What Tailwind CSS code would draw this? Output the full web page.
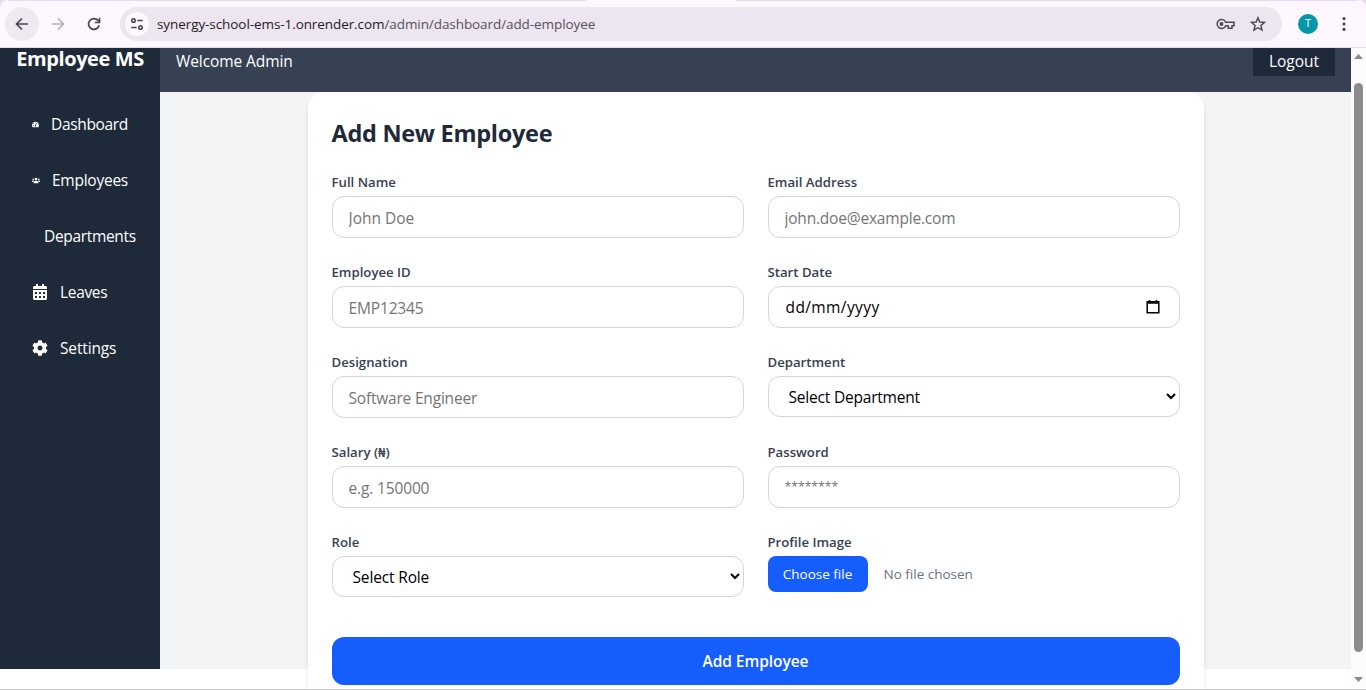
<!DOCTYPE html>
<html lang="en">
<head>
<meta charset="utf-8">
<title>Employee MS</title>
<script src="https://cdn.jsdelivr.net/npm/@tailwindcss/browser@4"></script>
</head>
<body class="h-[690px] w-[1366px] overflow-hidden bg-white font-['Open_Sans','Noto_Sans',sans-serif] text-[15.5px]">
<div class="flex h-[690px] flex-col">
  <!-- Browser toolbar -->
  <div class="h-12 shrink-0 bg-[#e9daf7]">
    <div class="relative flex h-12 items-center rounded-t-[8px] border-b border-[#e4dfe6] bg-[#fef7ff] pl-[5px] pr-[14px]">
      <div class="absolute left-2 top-0 h-px w-[578px] bg-[#e9daf7]"></div>
      <div class="absolute left-[736px] top-0 h-px w-[622px] bg-[#e9daf7]"></div>
      <div class="flex size-[34px] items-center justify-center rounded-full bg-[#f1e9f2]">
        <svg class="size-4" viewBox="0 0 16 16" fill="none" stroke="#4c4352" stroke-width="1.7"><path d="M14 8H3M8 2.500 2.500 8 8 13.500"/></svg>
      </div>
      <div class="ml-[11px] flex size-4 items-center justify-center">
        <svg class="size-4" viewBox="0 0 16 16" fill="none" stroke="#b6afb9" stroke-width="1.6"><path d="M2 8h11M8 2.500 13.500 8 8 13.500"/></svg>
      </div>
      <svg class="ml-5 size-4" viewBox="0 0 16 16" fill="none" stroke="#4c4352" stroke-width="1.7"><path d="M13.200 9.300A5.400 5.400 0 1 1 12 4.400L13.500 6"/><path d="M13.500 1.800v4.700H8.800"/></svg>
      <div class="ml-[18px] flex h-[34px] w-[1162px] items-center rounded-full bg-[#ede6f0] pl-[5px] pr-4">
        <div class="flex size-6 items-center justify-center rounded-full bg-[#fef7ff]">
          <svg class="size-4" viewBox="0 0 16 16" fill="none" stroke="#4a4550" stroke-width="1.5"><circle cx="4.500" cy="4.500" r="1.800"/><path d="M8.300 4.500h5.500M2.200 11.500h5.500"/><circle cx="11.500" cy="11.500" r="1.800"/></svg>
        </div>
        <div class="ml-2 whitespace-nowrap pt-px text-[13.500px] tracking-[-0.08px] text-[#1f1b24]">synergy-school-ems-1.onrender.com<span class="text-[#57515c]">/admin/dashboard/add-employee</span></div>
        <svg class="ml-auto h-[12px] w-[19px]" viewBox="0 0 19 12" fill="none" stroke="#4c4650" stroke-width="1.500"><path d="M9.800 4.200A4.500 4.500 0 1 0 9.800 7.800H12.200V10.200H16V7.800H18V4.200Z"/><circle cx="5.500" cy="6" r="1.200" fill="#4c4650"/></svg>
        <svg class="ml-[15px] size-4" viewBox="0 0 16 16" fill="none" stroke="#4c4650" stroke-width="1.400"><path d="M8 1.700 9.800 6l4.700.4-3.600 3.100 1.100 4.600L8 11.700l-4 2.400 1.100-4.600L1.500 6.400 6.200 6Z"/></svg>
      </div>
      <div class="ml-4 flex size-5 items-center justify-center rounded-full bg-[#0397a7] text-[11px] text-white">T</div>
      <svg class="ml-auto h-4 w-4" viewBox="0 0 16 16" fill="#4c4352"><circle cx="8" cy="2.600" r="1.600"/><circle cx="8" cy="8" r="1.600"/><circle cx="8" cy="13.400" r="1.600"/></svg>
    </div>
  </div>

  <!-- Page viewport -->
  <div class="flex h-[641px] shrink-0 overflow-hidden">
    <aside class="h-[621px] w-40 shrink-0 bg-gray-800 text-white">
      <div class="flex h-12 items-start justify-center whitespace-nowrap text-[20px] font-bold leading-[21px] tracking-[-0.4px]">Employee MS</div>
      <nav class="flex flex-col gap-4 px-4 pt-2 tracking-[-0.33px]">
        <a class="flex h-10 items-center whitespace-nowrap px-4 pt-0.5"><svg class="-mt-0.5 mr-3 h-[7px] w-[7px]" viewBox="0 0 576 512" fill="currentColor"><path d="M288 32C129 32 0 161 0 320c0 53 14 102 39 145 6 9 16 15 27 15h444c11 0 21-6 27-15 25-43 39-92 39-145C576 161 447 32 288 32zm0 64c18 0 32 14 32 32s-14 32-32 32-32-14-32-32 14-32 32-32zM96 384c-18 0-32-14-32-32s14-32 32-32 32 14 32 32-14 32-32 32zm48-160c-18 0-32-14-32-32s14-32 32-32 32 14 32 32-14 32-32 32zm246-72-61 184c14 12 23 29 23 48 0 12-3 23-9 32H233c-6-9-9-20-9-32 0-35 27-63 62-64l61-184c10-26 51-12 43 16z"/></svg>Dashboard</a>
        <a class="flex h-10 items-center whitespace-nowrap px-4 pt-0.5 tracking-[-0.25px]"><svg class="-mt-0.5 mr-3 h-[7px] w-2" viewBox="0 0 640 512" fill="currentColor"><circle cx="320" cy="144" r="112"/><circle cx="96" cy="160" r="64"/><circle cx="544" cy="160" r="64"/><path d="M128 432v-29c0-64 51-115 115-115h154c64 0 115 51 115 115v29c0 27-21 48-48 48H176c-27 0-48-21-48-48zM0 320c0-35 29-64 64-64h64c18 0 34 7 45 19-40 22-69 61-75 109H32c-18 0-32-14-32-32zM640 320c0-35-29-64-64-64h-64c-18 0-34 7-45 19 40 22 69 61 75 109h66c18 0 32-14 32-32z"/></svg>Employees</a>
        <a class="flex h-10 items-center whitespace-nowrap pl-7 pt-0.5">Departments</a>
        <a class="flex h-10 items-center whitespace-nowrap px-4 pt-0.5"><svg class="-mt-0.5 mr-3 size-4" viewBox="0 0 448 512" fill="currentColor"><path fill-rule="evenodd" d="M0 464c0 26 22 48 48 48h352c26 0 48-22 48-48V192H0zM64 256h64v64H64zM192 256h64v64h-64zM320 256h64v64h-64zM64 384h64v64H64zM192 384h64v64h-64zM320 384h64v64h-64zM400 64h-48V16c0-9-7-16-16-16h-32c-9 0-16 7-16 16v48H160V16c0-9-7-16-16-16h-32c-9 0-16 7-16 16v48H48C22 64 0 86 0 112v48h448v-48c0-26-22-48-48-48z"/></svg>Leaves</a>
        <a class="flex h-10 items-center whitespace-nowrap px-4 pt-0.5 tracking-[-0.15px]"><svg class="-mt-0.5 mr-3 size-4" viewBox="0 0 512 512" fill="currentColor"><path d="M487.400 315.700l-42.600-24.600c4.300-23.200 4.300-47 0-70.200l42.600-24.600c4.900-2.800 7.100-8.600 5.500-14-11.100-35.600-30-67.800-54.700-94.600-3.800-4.100-10-5.100-14.800-2.300L380.800 110c-17.900-15.400-38.500-27.300-60.800-35.100V25.800c0-5.600-3.900-10.500-9.400-11.700-36.700-8.200-74.300-7.800-109.200 0-5.500 1.200-9.400 6.100-9.400 11.700V75c-22.200 7.900-42.800 19.800-60.800 35.100L88.700 85.500c-4.900-2.800-11-1.900-14.800 2.300-24.700 26.700-43.600 58.900-54.700 94.600-1.700 5.400.6 11.200 5.500 14L67.300 221c-4.300 23.200-4.300 47 0 70.200l-42.600 24.600c-4.900 2.800-7.100 8.600-5.500 14 11.100 35.600 30 67.800 54.700 94.600 3.800 4.100 10 5.100 14.800 2.300l42.600-24.600c17.900 15.400 38.500 27.300 60.800 35.100v49.200c0 5.600 3.900 10.500 9.400 11.700 36.700 8.200 74.300 7.800 109.200 0 5.500-1.200 9.400-6.100 9.400-11.700v-49.200c22.200-7.900 42.800-19.800 60.800-35.100l42.600 24.600c4.900 2.800 11 1.900 14.800-2.300 24.700-26.700 43.600-58.900 54.700-94.600 1.500-5.500-.7-11.300-5.600-14.100zM256 336c-44.100 0-80-35.900-80-80s35.900-80 80-80 80 35.900 80 80-35.900 80-80 80z"/></svg>Settings</a>
      </nav>
    </aside>
    <div class="flex h-[621px] w-[1191px] shrink-0 flex-col bg-gray-100">
      <header class="flex h-11 shrink-0 items-start justify-between bg-gray-700 px-4 text-white">
        <p class="whitespace-nowrap leading-[26px] tracking-[-0.08px]">Welcome Admin</p>
        <div class="flex h-7 w-[82px] justify-center bg-gray-800 leading-[26px]">Logout</div>
      </header>
      <main class="mx-auto h-[660px] w-[896px] shrink-0 rounded-2xl bg-white p-6 shadow-md">
        <h2 class="mb-[23px] whitespace-nowrap pt-px text-[23.5px] font-bold leading-8 tracking-[-0.28px] text-gray-800">Add New Employee</h2>
        <form>
          <div class="grid auto-rows-[66px] grid-cols-2 gap-6">
            <div><label class="mb-1 block text-[13.2px] font-semibold leading-5 text-gray-700">Full Name</label><input class="block h-[42px] w-full rounded-xl border border-gray-300 px-4 pt-px placeholder:text-[#757575]" placeholder="John Doe"></div>
            <div><label class="mb-1 block text-[13.2px] font-semibold leading-5 text-gray-700">Email Address</label><input class="block h-[42px] w-full rounded-xl border border-gray-300 px-4 pt-px tracking-[-0.2px] placeholder:text-[#757575]" placeholder="john.doe@example.com"></div>
            <div><label class="mb-1 block text-[13.2px] font-semibold leading-5 text-gray-700">Employee ID</label><input class="block h-[42px] w-full rounded-xl border border-gray-300 px-4 pt-px tracking-[-0.15px] placeholder:text-[#757575]" placeholder="EMP12345"></div>
            <div><label class="mb-1 block text-[13.2px] font-semibold leading-5 text-gray-700">Start Date</label>
              <div class="flex h-[42px] items-center justify-between rounded-xl border border-gray-300 pl-[17px] pr-[19px] text-black"><span class="pt-0.5 tracking-[0.4px]">dd/mm/yyyy</span><svg class="h-4 w-[14px]" viewBox="0 0 14 16" fill="none" stroke="#000"><path stroke-width="1.500" d="M1.200 2.700h11.600v11.100H1.200z"/><path stroke-width="2.500" d="M1 3.500h12"/><path stroke-width="1.500" d="M3.500 1v2M10.500 1v2"/></svg></div></div>
            <div><label class="mb-1 block text-[13.2px] font-semibold leading-5 text-gray-700">Designation</label><input class="block h-[42px] w-full rounded-xl border border-gray-300 px-4 pt-px tracking-[-0.2px] placeholder:text-[#757575]" placeholder="Software Engineer"></div>
            <div><label class="mb-1 block text-[13.2px] font-semibold leading-5 text-gray-700">Department</label><select class="block h-[41px] w-full rounded-xl border border-gray-300 bg-white pl-4 pt-px tracking-[-0.2px] text-black"><option>Select Department</option></select></div>
            <div><label class="mb-1 block text-[13.2px] font-semibold leading-5 text-gray-700">Salary (₦)</label><input class="block h-[42px] w-full rounded-xl border border-gray-300 px-4 pt-px tracking-[-0.15px] placeholder:text-[#757575]" placeholder="e.g. 150000"></div>
            <div><label class="mb-1 block text-[13.2px] font-semibold leading-5 text-gray-700">Password</label><input class="block h-[42px] w-full rounded-xl border border-gray-300 px-4 pb-px text-[12.2px] placeholder:text-[#757575]" placeholder="********"></div>
            <div><label class="mb-1 block text-[13.2px] font-semibold leading-5 text-gray-700">Role</label><select class="block h-[41px] w-full rounded-xl border border-gray-300 bg-white pl-4 pt-px tracking-[-0.15px] text-black"><option>Select Role</option></select></div>
            <div><label class="mb-1 block text-[13.2px] font-semibold leading-5 text-gray-700">Profile Image</label>
              <div class="flex items-center gap-4 text-[13.5px]"><span class="flex h-9 w-[100px] items-center justify-center rounded-lg bg-blue-600 pt-px text-white">Choose file</span><span class="pt-px text-gray-500">No file chosen</span></div></div>
          </div>
          <button type="button" class="mt-[39px] h-12 w-full rounded-xl bg-blue-600 pt-0.5 text-[15.5px] font-semibold tracking-[-0.05px] text-white">Add Employee</button>
        </form>
      </main>
    </div>
    <!-- Scrollbar -->
    <div class="flex h-[641px] w-[15px] shrink-0 flex-col items-center bg-[#fcfcfc]">
      <svg class="mt-[6px] h-[5px] w-[9px]" viewBox="0 0 9 5" fill="#8b8b8b"><path d="M4.500 0 9 5H0z"/></svg>
      <div class="mt-6 h-[569px] w-[9px] rounded-full bg-[#8b8b8b]"></div>
      <svg class="mt-[25px] h-[5px] w-[9px]" viewBox="0 0 9 5" fill="#8b8b8b"><path d="M0 0h9L4.500 5z"/></svg>
    </div>
  </div>
  <div class="h-px shrink-0 bg-[#cfcdd0]"></div>
</div>
</body>
</html>
